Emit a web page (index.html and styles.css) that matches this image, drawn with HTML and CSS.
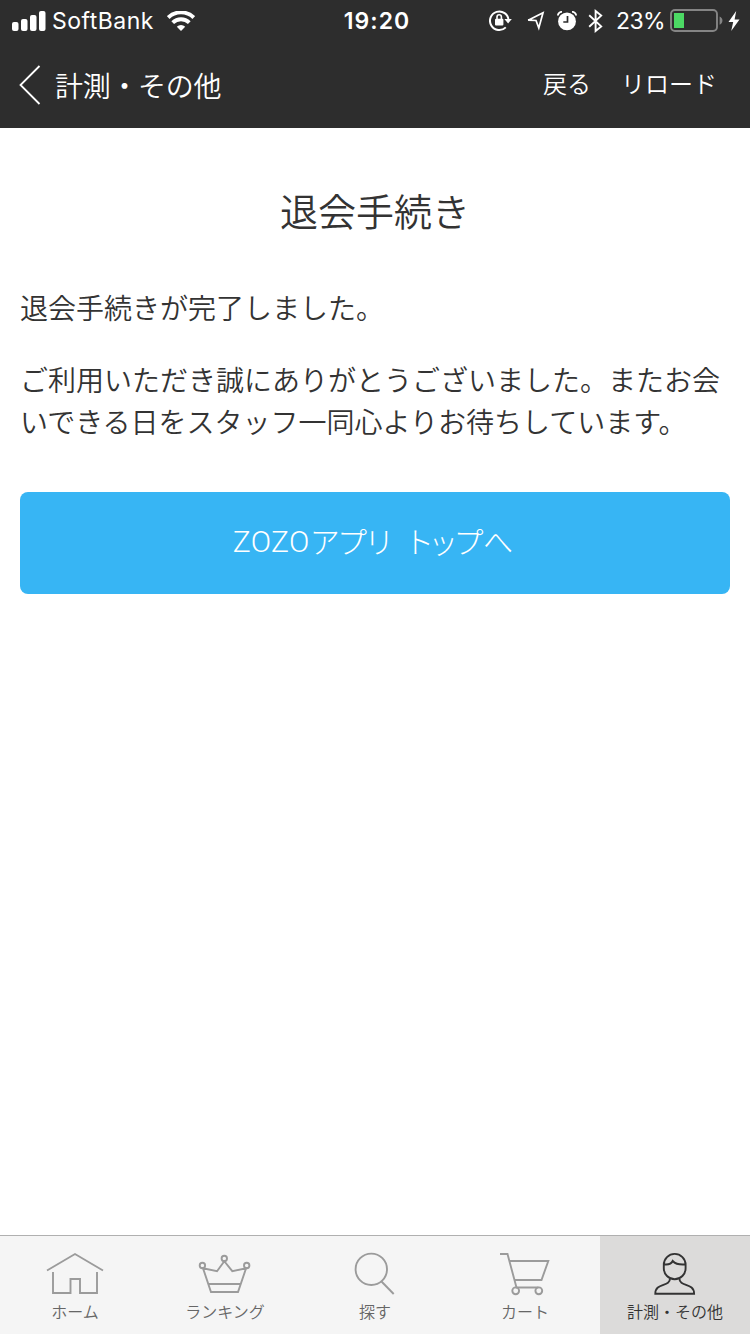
FILE: index.html
```
<!DOCTYPE html>
<html lang="ja">

<head>
    <meta charset="UTF-8">
    <meta name="viewport" content="width=device-width, initial-scale=1.0">
    <title>退会手続き</title>

    <link rel="stylesheet" href="styles.css">
</head>

<body>

    <div class="app">
        <header class="header">
            <div class="status">
                <div class="status__left">
                    <svg class="status__signal" width="34" height="20" viewBox="0 0 34 20" fill="#fff">
                        <rect x="0" y="11" width="6.5" height="9" rx="2" />
                        <rect x="9" y="8" width="6.5" height="12" rx="2" />
                        <rect x="18" y="4" width="6.5" height="16" rx="2" />
                        <rect x="27" y="0" width="6.5" height="20" rx="2" />
                    </svg>
                    <span class="status__carrier">SoftBank</span>
                    <svg class="status__wifi" width="28" height="20" viewBox="0 0 28 20" fill="none" stroke="#fff" stroke-width="3.9">
                        <path d="M1.2 6.6a18.3 18.3 0 0 1 25.6 0" />
                        <path d="M5.7 11.6a12 12 0 0 1 16.6 0" />
                        <path d="M14 20l-4.2-4.3a6.2 6.2 0 0 1 8.4 0z" fill="#fff" stroke="none" />
                    </svg>
                </div>
                <div class="status__time">19:20</div>
                <div class="status__right">
                    <svg class="status__lock" width="24" height="22" viewBox="0 0 24 22" fill="none" stroke="#fff" stroke-width="2">
                        <path d="M16.8 17.4A9.3 9.3 0 1 1 19.6 10.2" />
                        <path d="M15.4 8.9h7.4l-3.7 4.6z" fill="#fff" stroke="none" />
                        <rect x="6" y="8.8" width="8.4" height="6.6" rx="1" fill="#fff" stroke="none" />
                        <path d="M8 9.4V7a2.2 2.2 0 0 1 4.4 0v2.4" stroke-width="1.6" />
                    </svg>
                    <svg class="status__location" width="20" height="20" viewBox="0 0 20 20" fill="none" stroke="#fff" stroke-width="1.7">
                        <path d="M18 1.8L3.2 9.2l7.8.3 2.8 7.4z" />
                    </svg>
                    <svg class="status__alarm" width="20" height="20" viewBox="0 0 20 20" fill="#fff">
                        <circle cx="10" cy="10.4" r="8.9" />
                        <path d="M.9 4.6A3.8 3.8 0 0 1 5 .9M15 .9a3.8 3.8 0 0 1 4.1 3.7" fill="none" stroke="#fff" stroke-width="1.9" />
                        <path d="M10.5 5v6H6.3" fill="none" stroke="#2d2d2d" stroke-width="1.7" />
                    </svg>
                    <svg class="status__bluetooth" width="16" height="24" viewBox="0 0 16 24" fill="none" stroke="#fff" stroke-width="1.9">
                        <path d="M1.2 6.2l12 11.2L7.6 22V2l5.6 4.6L1.2 17.8" />
                    </svg>
                    <span class="status__percent">23%</span>
                    <svg class="status__battery" width="54" height="24" viewBox="0 0 54 24">
                        <rect x="1" y="1" width="46" height="21" rx="4" fill="none" stroke="#858585" stroke-width="1.9" />
                        <rect x="4" y="4" width="10" height="15" fill="#4cd964" />
                        <path d="M49.6 7.5c3.8 1.4 3.8 6.8 0 8.2z" fill="#858585" />
                    </svg>
                    <svg class="status__bolt" width="12" height="20" viewBox="0 0 12 20" fill="#fff">
                        <path d="M8.2 0L.5 11h4.7L3.2 20l8.3-11.6H6.6z" />
                    </svg>
                </div>
            </div>

            <nav class="nav">
                <a class="nav__back" href="#">
                    <svg width="22" height="40" viewBox="0 0 22 40" fill="none" stroke="#fff" stroke-width="1.8">
                        <path d="M20.5 1L1.5 20l19 19" />
                    </svg>
                    <span>計測・その他</span>
                </a>
                <div class="nav__links">
                    <a href="#">戻る</a>
                    <a href="#">リロード</a>
                </div>
            </nav>
        </header>

        <main class="content">
            <h1 class="content__title">退会手続き</h1>
            <p>退会手続きが完了しました。</p>
            <p>ご利用いただき誠にありがとうございました。またお会いできる日をスタッフ一同心よりお待ちしています。</p>
            <a class="button" href="#"><span class="button__brand">ZOZO</span>アプリ トップへ</a>
        </main>

        <nav class="tabs">
            <a class="tab" href="#">
                <svg width="60" height="44" viewBox="0 0 60 44">
                    <path d="M2 18.5L30 2l28 16.5M8 20v21h17.5V27h9.5v14h17V20" />
                </svg>
                <span>ホーム</span>
            </a>
            <a class="tab" href="#">
                <svg width="60" height="44" viewBox="0 0 60 44">
                    <circle cx="29.3" cy="6.5" r="2.7" />
                    <circle cx="7.4" cy="13.5" r="2.7" />
                    <circle cx="51.7" cy="13.5" r="2.7" />
                    <path d="M8 16.2l14 3 7.3-10 8 10 13.8-3L43 40H16zM13 32h32.5" />
                </svg>
                <span>ランキング</span>
            </a>
            <a class="tab" href="#">
                <svg width="60" height="44" viewBox="0 0 60 44">
                    <circle cx="26.3" cy="17.3" r="15.7" />
                    <path d="M36.5 29.5L48.7 42" />
                </svg>
                <span>探す</span>
            </a>
            <a class="tab" href="#">
                <svg width="60" height="44" viewBox="0 0 60 44">
                    <path d="M5 2h7.5l9 33.5h21.8M14.7 9h38.6L46.5 28H20" />
                    <circle cx="20.7" cy="38.8" r="3.4" />
                    <circle cx="43.8" cy="38.8" r="3.4" />
                </svg>
                <span>カート</span>
            </a>
            <a class="tab tab--active" href="#">
                <svg width="60" height="44" viewBox="0 0 60 44">
                    <path d="M18.8 12.8a10.9 10.9 0 0 1 21.8 0v3.5a10.9 10.9 0 0 1-21.8 0zM18.8 12.4c4.4.6 7.6-.5 8.9-3.4 2.6 2.8 6.7 4 12.9 3.4" />
                    <path d="M25 26.6c0 8.6-14.7 3.9-14.7 15.1h38.8c0-11.2-14.7-6.5-14.7-15.1" />
                </svg>
                <span>計測・その他</span>
            </a>
        </nav>
    </div>

</body>

</html>
```
FILE: styles.css
```
* {
    box-sizing: border-box;
}

body {
    margin: 0;
    background: #fff;
    color: #333;
    font-family: "Noto Sans CJK JP", sans-serif;
    font-weight: 350;
}

a {
    color: inherit;
    text-decoration: none;
}

svg {
    display: block;
    flex: none;
}

.app {
    display: flex;
    flex-direction: column;
    height: 1334px;
}

.header {
    height: 128px;
    background: #2d2d2d;
    color: #fff;
}

.status {
    display: grid;
    grid-template-columns: 1fr auto 1fr;
    align-items: center;
    height: 41px;
    padding: 0 10px 0 12px;
    font-family: Inter, sans-serif;
    font-size: 23px;
    font-weight: 400;
}

.status__left,
.status__right {
    display: flex;
    align-items: center;
}

.status__right {
    justify-content: flex-end;
}

.status__carrier {
    margin: 0 13px 0 6px;
    letter-spacing: 0.5px;
}

.status__time {
    padding-left: 2px;
    font-weight: 600;
    letter-spacing: 1px;
}

.status__location {
    margin: 0 12px 0 12px;
}

.status__bluetooth {
    margin: 0 12px 0 11px;
}

.status__percent {
    margin-right: 5px;
    letter-spacing: -0.6px;
}

.status__bolt {
    margin-left: 4px;
}

.nav {
    display: flex;
    justify-content: space-between;
    height: 87px;
    padding: 0 33px 0 19px;
}

.nav__back {
    display: flex;
    align-items: center;
    gap: 14px;
    height: 88px;
    font-size: 28px;
    letter-spacing: -0.3px;
}

.nav__back span {
    line-height: 40px;
    padding-bottom: 1px;
}

.nav__links {
    display: flex;
    align-items: center;
    gap: 30px;
    height: 82px;
    font-size: 24px;
}

.content {
    flex: 1;
    padding: 53px 20px 0;
    font-size: 28px;
    line-height: 42px;
}

.content__title {
    margin: 0 0 48px;
    font-size: 38px;
    font-weight: 350;
    line-height: 57px;
    text-align: center;
}

.content p {
    margin: 0 0 30px;
}

.button {
    display: flex;
    align-items: center;
    justify-content: center;
    height: 102px;
    margin-top: 50px;
    padding: 0 4px 7px 0;
    border-radius: 8px;
    background: #37b5f4;
    color: #fff;
    font-size: 30px;
    font-weight: 300;
    font-feature-settings: "palt";
    white-space: pre;
    word-spacing: 11px;
}

.button__brand {
    margin-right: 1px;
    padding-top: 5px;
    font-family: Roboto, sans-serif;
    letter-spacing: 0.4px;
}

.tabs {
    display: grid;
    grid-template-columns: repeat(5, 1fr);
    height: 99px;
    border-top: 1px solid #b0b0b0;
    background: #f5f5f5;
}

.tab {
    display: flex;
    flex-direction: column;
    align-items: center;
    padding-top: 16px;
    color: #666;
    font-size: 16px;
    line-height: 24px;
}

.tab svg {
    margin-bottom: 3px;
    fill: none;
    stroke: #9b9b9b;
    stroke-width: 1.9;
}

.tab--active {
    background: #dcdbda;
    color: #333;
}

.tab--active svg {
    stroke: #333;
}
```
